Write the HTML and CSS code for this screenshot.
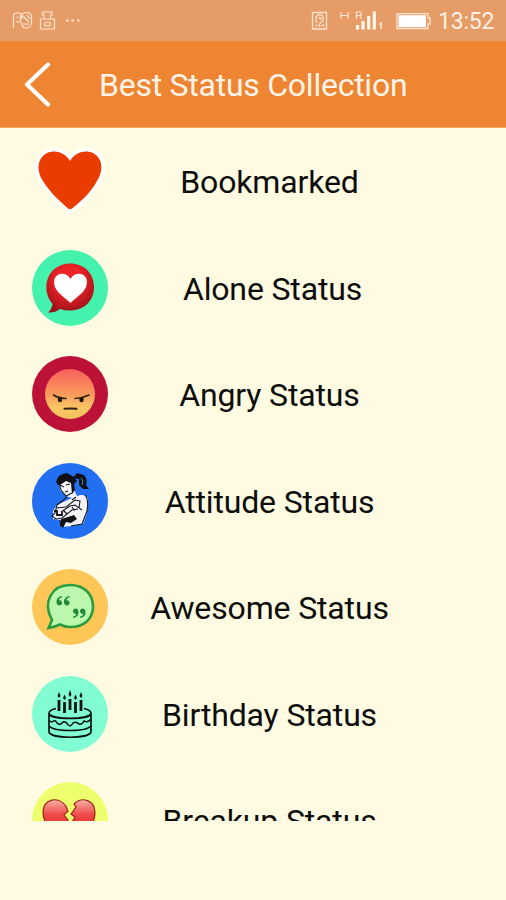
FILE: index.html
```
<!DOCTYPE html>
<html lang="en">
<head>
  <meta charset="UTF-8">
  <meta name="viewport" content="width=device-width, initial-scale=1.0">
  <title>Best Status Collection</title>
  <link rel="stylesheet" href="styles.css">
</head>
<body>
  <div class="status-bar">
    <svg class="notifications" width="72" height="22" viewBox="0 0 72 22" fill="none" stroke="#fbe5d3" stroke-width="1.2">
      <path d="M2.500 18V6Q2.500 3 5.500 3H8Q11 3 11 6V9M5 12H9M5.500 7H7.500M10 5Q12 2.500 16 2.500Q20.500 3 20.500 7V13Q19.500 18 15 18Q11 18 11 14Q8 10 10 5ZM12 6L18 12M16 5L19 9M12 14H18"/>
      <path d="M31.500 2H41V5H39.500V9H33V5H31.500ZM29.500 9H43.500V19H29.500Z"/>
      <ellipse cx="36.500" cy="14" rx="3" ry="2"/>
      <path d="M55 10.500H57.500M60.500 10.500H63M66 10.500H68.500" stroke-width="2.200"/>
    </svg>
    <svg class="signal" width="121" height="22" viewBox="0 0 121 22" fill="none" stroke="#fbe5d3" stroke-width="1.300">
      <path d="M2.500 2.500H16.500V19H2.500ZM7 13Q5 10 6 7Q9 3 12.500 6Q14.500 10 11.500 12L9.500 14V17M5.500 15.500H7.500M11.500 15.500H14.500M8.500 8H10.500V10"/>
      <path d="M31 2V9M38 2V9M31 5.500H38M46.500 9V2H50Q52 2.500 51 5.500H47M49.500 5.500L52 9" stroke-width="1.200"/>
      <path d="M47.500 15V19.500M53 11V19.500M58.700 6V19.500M64.300 1.500V19.500" stroke="#fff5eb" stroke-width="3.200"/>
      <path d="M69.500 14.500L71 13V19" stroke-width="1.500"/>
      <path d="M87 3.700H118V8H120V14H118V18.500H87Z"/>
      <path d="M88.500 5.200H116V17H88.500Z" fill="#fff" stroke="none"/>
    </svg>
    <span class="time">13:52</span>
  </div>

  <header class="header">
    <svg class="back" width="30" height="46" viewBox="0 0 30 46" fill="none" stroke="#fff" stroke-width="4.200" stroke-linecap="round" stroke-linejoin="round">
      <path d="M26 3.500L5 23.500L26 43.500"/>
    </svg>
    <h1>Best Status Collection</h1>
  </header>

  <ul class="list">
    <li>
      <svg class="icon" viewBox="0 0 76 76">
        <path d="M38 18C32 8 22 7 15 10C4 16 5 29 11 38C19 51 29 59 36 65.500Q38 67 40 65.500C48 59 58 51 65 38C71 29 72 16 61 10C54 7 44 8 38 18Z" fill="#eb3c00" stroke="#fff" stroke-width="7" stroke-linejoin="round" paint-order="stroke"/>
      </svg>
      <span>Bookmarked</span>
    </li>
    <li>
      <svg class="icon" viewBox="0 0 76 76">
        <defs>
          <radialGradient id="bubble" cx=".48" cy=".35" r=".68">
            <stop offset=".4" stop-color="#ec2428"/>
            <stop offset="1" stop-color="#980d16"/>
          </radialGradient>
        </defs>
        <circle cx="38" cy="38" r="38" fill="#44f2ad"/>
        <path d="M38 13.500C52 13.500 62 23 62 37C62 51 52 60.500 38 60.500Q33 60.500 28 59Q23 63 16 62.500Q20 59 20.500 54C8 39 15 14 38 13.500Z" fill="url(#bubble)"/>
        <path d="M38.500 29C35 22 25 22 22.500 29C20 40 30 45 38.500 53C47 45 57 40 54.500 29C52 22 42 22 38.500 29Z" fill="#fff"/>
      </svg>
      <span class="shifted">Alone Status</span>
    </li>
    <li>
      <svg class="icon" viewBox="0 0 76 76">
        <defs>
          <linearGradient id="face" x2="0" y2="1">
            <stop offset="0" stop-color="#f9605b"/>
            <stop offset=".5" stop-color="#f99a5d"/>
            <stop offset=".78" stop-color="#fbc764"/>
            <stop offset="1" stop-color="#f5bf5b"/>
          </linearGradient>
        </defs>
        <circle cx="38" cy="38" r="38" fill="#bd1238"/>
        <circle cx="38" cy="38" r="25" fill="url(#face)"/>
        <g fill="none" stroke="#302315" stroke-width="1.600" stroke-linecap="round">
          <path d="M21.500 39Q26 42 34 42.500M57 39Q51 42 43 42.500"/>
          <path d="M32.500 52.800Q38 52 44.500 52.800" stroke-width="2"/>
        </g>
        <ellipse cx="28" cy="43.500" rx="2.200" ry="2.800" fill="#261b10"/>
        <ellipse cx="49.500" cy="43.500" rx="2.200" ry="2.800" fill="#261b10"/>
      </svg>
      <span>Angry Status</span>
    </li>
    <li>
      <svg class="icon" viewBox="0 0 76 76">
        <circle cx="38" cy="38" r="38" fill="#236ff2"/>
        <path d="M27 17L40 15L43 29L45 33Q53 30 56 36L55 50L51 61L40 63L29 64L28 57L21 56L21 48L25 42L40 35L34 33L28 27Z" fill="#f4f4f6"/>
        <path d="M24 19Q25 11 35 10L42 14L45 18L42 21L43 27L40 31L39 20L34 18L28 22L26 22Z" fill="#101018"/>
        <path d="M41 15L45 10L52 12Q56 16 54 22L57 26L51 26L47 22L47 16ZM29 56L36 54L42 52L45 56L39 60L34 59L31 65L28 62Z" fill="#101018"/>
        <g fill="none" stroke="#17171f" stroke-width="1.100">
          <path d="M27 20L29 27L34 33L40 30M28 22L32 24M34 22L38 21M33 29L36 28M35 34L25 42L23 50L20 53L24 56L30 55L40 47L46 46M25 45L34 44L43 37L48 38L47 45M29 49L38 43L43 42L50 47M44 34L40 37M53 32Q57 37 55 48L50 61L39 63M28 57L29 64M31 47L35 51M40 44L43 48"/>
          <path d="M22 48H25V52H30V49" stroke-width="1.800"/>
        </g>
        <path d="M49 15L51 18L50 22" fill="none" stroke="#4f9aa8"/>
      </svg>
      <span>Attitude Status</span>
    </li>
    <li>
      <svg class="icon" viewBox="0 0 76 76">
        <circle cx="38" cy="38" r="38" fill="#fec656"/>
        <path d="M38 16C52 16 61 25 61 37.500C61 50 52 58 38 58Q33 58 28 55.500Q23 58 16.500 59L20 51C10 33 20 16 38 16Z" fill="#bbf8ad" stroke="#2b9d3e" stroke-width="2.600"/>
        <g fill="#20893a">
          <path id="quote" d="M30 27Q24 28 24.500 33.500Q25 36.500 27.500 36.500Q30.500 36 30 33Q29 31 27 31Q27 29 30 28.500Z"/>
          <use href="#quote" x="7.500"/>
          <use href="#quote" transform="rotate(180 35.500 38)"/>
          <use href="#quote" transform="rotate(180 39 38)"/>
        </g>
      </svg>
      <span>Awesome Status</span>
    </li>
    <li>
      <svg class="icon" viewBox="0 0 76 76">
        <circle cx="38" cy="38" r="38" fill="#82fcd2"/>
        <g fill="none" stroke="#07130f" stroke-width="1.700">
          <path d="M24 32.500Q17 34 17 37.500C18 44 58 44 59 37.500Q59 34 52 32.500M17 37.500V56C19 63 57 63 59 56V37.500"/>
          <path d="M17 45L20 46Q23 43 25 47Q28 50 31 46Q34 45 36 49Q39 51 41 47Q44 45 47 48Q50 49 52 45Q56 47 59 43M17 50C22 56 54 56 59 50" stroke-width="1.500"/>
          <path d="M27 24V35M32.500 26V37M38 23V34M43.500 26V37M49 24V35" stroke-width="2.800"/>
        </g>
        <path d="M27 16L28.500 20L27 22L25.500 20ZM32.500 18.500L34 22L32.500 24L31 22ZM38 14L39.500 18.500L38 21L36.500 18.500ZM43.500 18.500L45 22L43.500 24L42 22ZM49 16L50.500 20L49 22L47.500 20Z" fill="#07130f"/>
      </svg>
      <span>Birthday Status</span>
    </li>
    <li>
      <svg class="icon" viewBox="0 0 76 76">
        <defs>
          <linearGradient id="broken" x2="0" y2="1">
            <stop offset="0" stop-color="#f8afa2"/>
            <stop offset=".35" stop-color="#ef4a49"/>
            <stop offset="1" stop-color="#d81920"/>
          </linearGradient>
        </defs>
        <circle cx="38" cy="38" r="38" fill="#edff6c"/>
        <g fill="url(#broken)" stroke="#9c221c" stroke-width="1.200">
          <path d="M34 24L36 29L32 33L36 38L32 43L38 60C23 51 11 43 11 31C11 16 27 14 34 24Z"/>
          <path d="M42 22L44 25L39 32L43 35L39 42L42 60C55 51 63 42 63 31C63 18 50 14 42 22Z"/>
        </g>
      </svg>
      <span>Breakup Status</span>
    </li>
  </ul>
</body>
</html>
```
FILE: styles.css
```
* {
  box-sizing: border-box;
}
body {
  margin: 0;
  height: 900px;
  overflow: hidden;
  background: #fefbe2;
  color: #0d0d0b;
  font-family: Roboto, sans-serif;
}
.status-bar {
  height: 41px;
  padding: 0 12px 0 11px;
  background: #e69c66;
  display: flex;
  align-items: center;
}
.signal {
  margin-left: auto;
}
.time {
  width: 56px;
  padding-top: 1px;
  margin-left: 7px;
  color: #fff1e5;
  font-size: 23px;
  letter-spacing: -0.2px;
  line-height: 41px;
  white-space: nowrap;
}
.header {
  height: 87px;
  padding-left: 22px;
  background: #ee8532;
  border-bottom: 1px solid #f1a45d;
  display: flex;
  align-items: center;
}
.back {
  flex: none;
  margin-right: 47px;
}
h1 {
  margin: 0;
  padding-top: 2px;
  color: #fff4e7;
  font-size: 32px;
  font-weight: 400;
  letter-spacing: -0.25px;
  line-height: 40px;
  white-space: nowrap;
}
.list {
  height: 693px;
  margin: 0;
  padding: 0;
  overflow: hidden;
  list-style: none;
}
.list li {
  height: 106.5px;
  padding-left: 32px;
  display: flex;
  align-items: center;
}
.icon {
  width: 76px;
  height: 76px;
  flex: none;
}
.list span {
  width: 323px;
  padding-top: 1.5px;
  font-size: 32px;
  letter-spacing: -0.15px;
  line-height: 40px;
  text-align: center;
  white-space: nowrap;
}
.list .shifted {
  padding-left: 6px;
}
```
